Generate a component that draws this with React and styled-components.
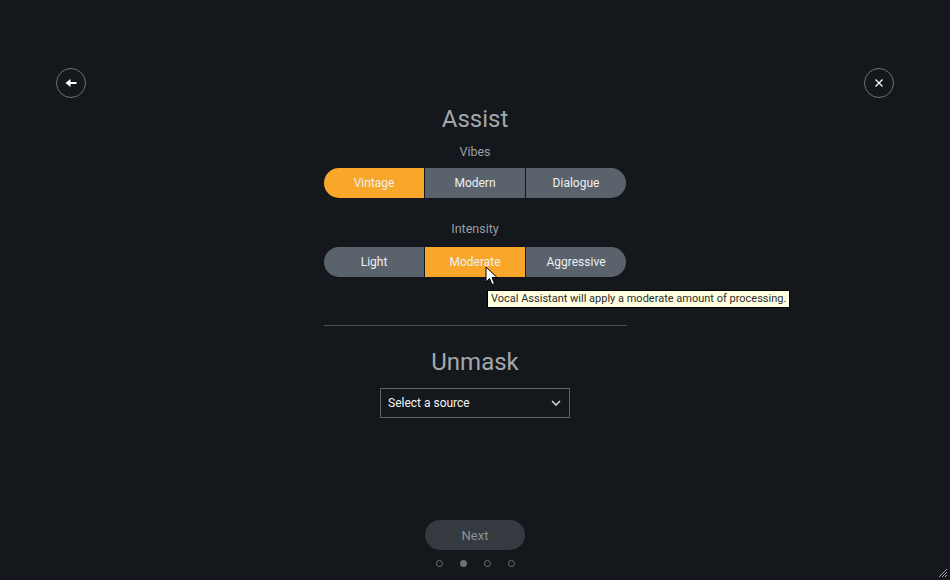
import React from "react";
import styled, { createGlobalStyle } from "styled-components";

const GlobalStyle = createGlobalStyle`
  html, body {
    margin: 0;
    padding: 0;
    background: #14171b;
    font-family: Roboto, "Liberation Sans", sans-serif;
  }
`;

const Page = styled.div`
  position: relative;
  height: 580px;
  display: flex;
  flex-direction: column;
  padding-top: 68px;
  box-sizing: border-box;
  overflow: hidden;
`;

const TopBar = styled.div`
  display: flex;
  justify-content: space-between;
  padding: 0 56px;
  height: 30px;
`;

const CircleButton = styled.button`
  width: 30px;
  height: 30px;
  border-radius: 50%;
  border: 1px solid #6b7177;
  background: transparent;
  padding: 0;
  display: flex;
  align-items: center;
  justify-content: center;
  color: #ffffff;
`;

const Content = styled.div`
  display: flex;
  flex-direction: column;
  align-items: center;
`;

const Title = styled.h1`
  margin: ${(p) => p.$top}px 0 0;
  font-size: 24px;
  line-height: 28px;
  font-weight: 400;
  color: #a3a7ab;
`;

const Label = styled.div`
  margin-top: ${(p) => p.$top}px;
  font-size: 12.5px;
  line-height: 16px;
  color: #9b9fa3;
`;

const SegmentWrap = styled.div`
  position: relative;
  margin-top: ${(p) => p.$top}px;
`;

const Segmented = styled.div`
  display: flex;
  gap: 1px;
  border-radius: 15px;
  overflow: hidden;
`;

const Segment = styled.div`
  width: 100px;
  height: 30px;
  display: flex;
  align-items: center;
  justify-content: center;
  font-size: 12px;
  color: #eef0f2;
  background: ${(p) => (p.$active ? "#f9a72b" : "#5a636b")};
`;

const Cursor = styled.svg`
  position: absolute;
  left: 161px;
  top: 19px;
`;

const Tooltip = styled.div`
  position: absolute;
  left: 163px;
  top: 43px;
  white-space: nowrap;
  background: #ffffe1;
  border: 1px solid #000;
  padding: 0 3px;
  height: 16px;
  line-height: 16px;
  font-size: 11px;
  color: #2b2b2b;
`;

const Divider = styled.div`
  width: 303px;
  height: 1px;
  background: #4b5157;
  margin-top: 48px;
`;

const Select = styled.div`
  margin-top: 12px;
  width: 190px;
  height: 30px;
  box-sizing: border-box;
  border: 1px solid #5d656c;
  display: flex;
  align-items: center;
  justify-content: space-between;
  padding: 0 8px 0 7px;
  font-size: 12px;
  color: #f4f5f6;
`;

const Footer = styled.div`
  margin-top: auto;
  padding-bottom: 13px;
  display: flex;
  flex-direction: column;
  align-items: center;
  gap: 10px;
`;

const NextButton = styled.button`
  width: 100px;
  height: 30px;
  border-radius: 15px;
  border: none;
  background: #343a3f;
  color: #8c9196;
  font-family: Roboto, "Liberation Sans", sans-serif;
  font-size: 13px;
`;

const Dots = styled.div`
  display: flex;
  gap: 17px;
  padding-left: 1px;
`;

const Dot = styled.span`
  width: 7px;
  height: 7px;
  border-radius: 50%;
  box-sizing: border-box;
  border: ${(p) => (p.$active ? "none" : "1px solid #6b7177")};
  background: ${(p) => (p.$active ? "#6b7177" : "transparent")};
`;

const Grip = styled.svg`
  position: absolute;
  right: 2px;
  bottom: 2px;
`;

const vibes = ["Vintage", "Modern", "Dialogue"];
const intensity = ["Light", "Moderate", "Aggressive"];

export default function App() {
  return (
    <>
      <GlobalStyle />
      <Page>
        <TopBar>
          <CircleButton aria-label="Back">
            <svg width="12" height="10" viewBox="0 0 12 10">
              <path d="M0.5 5 L5.5 1 L5.5 9 Z" fill="#fff" />
              <rect x="5" y="4" width="6.5" height="2" fill="#fff" />
            </svg>
          </CircleButton>
          <CircleButton aria-label="Close">
            <svg width="10" height="10" viewBox="0 0 10 10">
              <path d="M1.5 1.5 L8.5 8.5 M8.5 1.5 L1.5 8.5" stroke="#fff" strokeWidth="1.2" />
            </svg>
          </CircleButton>
        </TopBar>
        <Content>
          <Title $top={7}>Assist</Title>
          <Label $top={11}>Vibes</Label>
          <SegmentWrap $top={8}>
            <Segmented>
              {vibes.map((v, i) => (
                <Segment key={v} $active={i === 0}>
                  {v}
                </Segment>
              ))}
            </Segmented>
          </SegmentWrap>
          <Label $top={23}>Intensity</Label>
          <SegmentWrap $top={10}>
            <Segmented>
              {intensity.map((v, i) => (
                <Segment key={v} $active={i === 1}>
                  {v}
                </Segment>
              ))}
            </Segmented>
            <Cursor width="13" height="20" viewBox="0 0 13 20">
              <path
                d="M1 1 L1 16 L4.5 12.5 L7 18.5 L9.5 17.5 L7 11.5 L12 11.5 Z"
                fill="#fff"
                stroke="#000"
                strokeWidth="1"
              />
            </Cursor>
            <Tooltip>Vocal Assistant will apply a moderate amount of processing.</Tooltip>
          </SegmentWrap>
          <Divider />
          <Title $top={22}>Unmask</Title>
          <Select>
            <span>Select a source</span>
            <svg width="10" height="6" viewBox="0 0 10 6">
              <path d="M1 1 L5 5 L9 1" fill="none" stroke="#d8dadc" strokeWidth="1.5" />
            </svg>
          </Select>
        </Content>
        <Footer>
          <NextButton>Next</NextButton>
          <Dots>
            <Dot />
            <Dot $active />
            <Dot />
            <Dot />
          </Dots>
        </Footer>
        <Grip width="10" height="10" viewBox="0 0 10 10">
          <path d="M9 1 L1 9 M9 4 L4 9 M9 7 L7 9" stroke="#9aa0a5" strokeWidth="1" />
        </Grip>
      </Page>
    </>
  );
}
